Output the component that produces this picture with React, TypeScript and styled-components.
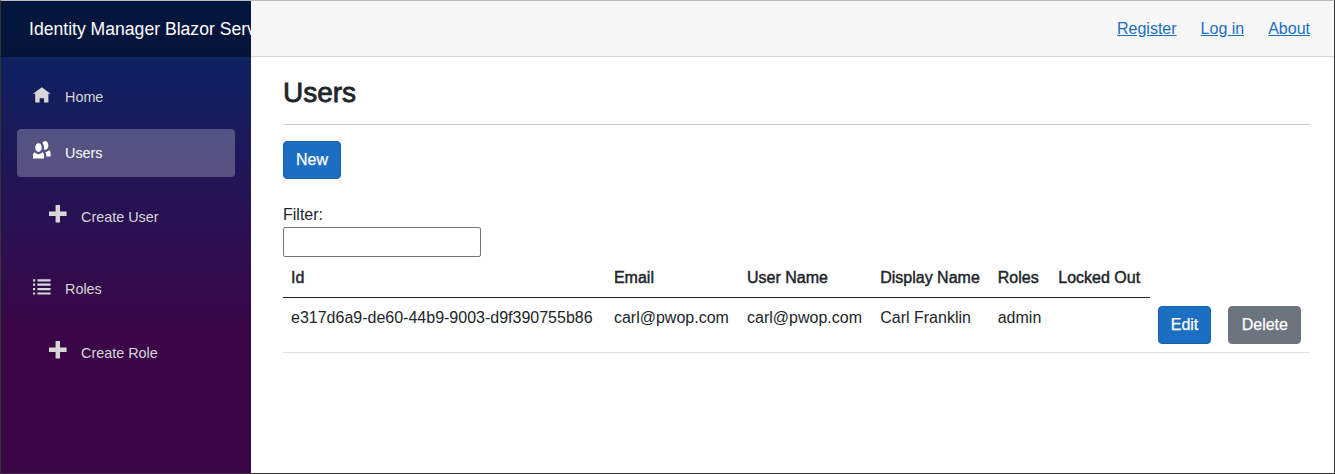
import React from 'react'
import styled, { createGlobalStyle } from 'styled-components'

const GlobalStyle = createGlobalStyle`
  html, body {
    margin: 0;
    padding: 0;
    height: 100%;
    background: #fff;
    overflow: hidden;
  }
  body {
    font-family: 'Liberation Sans', Arial, sans-serif;
    font-size: 16px;
    line-height: 1.5;
    color: #212529;
  }
  * {
    box-sizing: border-box;
  }
`

const Page = styled.div`
  display: flex;
  width: 1335px;
  height: 474px;
  border-top: 1px solid #bbb;
  border-left: 1px solid #333;
  border-right: 1px solid #333;
  border-bottom: 1px solid #333;
`

const Sidebar = styled.div`
  width: 250px;
  flex-shrink: 0;
  background-image: linear-gradient(180deg, #052767 0%, #3a0647 70%);
`

const Brand = styled.div`
  height: 56px;
  display: flex;
  align-items: center;
  padding-left: 28px;
  background-color: rgba(0, 0, 0, 0.4);
  overflow: hidden;
  white-space: nowrap;
  color: #fff;
  font-size: 17.6px;
`

const Nav = styled.nav`
  padding-top: 16px;
`

const NavItem = styled.div<{ $gap: number; $sub?: boolean }>`
  padding: 0 16px 0 ${p => (p.$sub ? 32 : 16)}px;
  margin-bottom: ${p => p.$gap}px;
`

const NavLink = styled.a<{ $active?: boolean }>`
  display: flex;
  align-items: center;
  height: 48px;
  padding: 2px 0 0 16px;
  border-radius: 4px;
  font-size: 14.4px;
  color: ${p => (p.$active ? '#fff' : '#d7d7d7')};
  background-color: ${p => (p.$active ? 'rgba(255, 255, 255, 0.25)' : 'transparent')};
`

const NavIcon = styled.svg`
  width: 17.6px;
  height: 17.6px;
  margin: 0 14.4px 8.4px 0;
  fill: currentColor;
  flex-shrink: 0;
`

const Main = styled.div`
  flex: 1;
  min-width: 0;
`

const TopRow = styled.div`
  height: 56px;
  display: flex;
  align-items: center;
  justify-content: flex-end;
  gap: 24px;
  padding-right: 24px;
  background-color: #f7f7f7;
  border-bottom: 1px solid #d6d5d5;
`

const TopLink = styled.a`
  color: #1b6ec2;
  text-decoration: underline;
`

const Content = styled.div`
  padding: 16px 24px 0 32px;
`

const Title = styled.h1`
  margin: 0;
  font-size: 28px;
  font-weight: 400;
  line-height: 40px;
  -webkit-text-stroke: 0.8px #212529;
`

const Rule = styled.hr`
  margin: 11px 0 16px;
  border: 0;
  border-top: 1px solid #c8c8c8;
`

const Button = styled.button<{ $variant?: 'primary' | 'secondary' }>`
  height: 38px;
  padding: 0 12px;
  font-family: inherit;
  font-size: 16px;
  line-height: 1.5;
  color: #fff;
  -webkit-text-stroke: 0.25px #fff;
  border-radius: 4px;
  border: 1px solid ${p => (p.$variant === 'secondary' ? '#6c757d' : '#1861ac')};
  background-color: ${p => (p.$variant === 'secondary' ? '#6c757d' : '#1b6ec2')};
`

const FilterLabel = styled.div`
  margin-top: 24px;
  line-height: 24px;
`

const FilterInput = styled.input`
  display: block;
  width: 198px;
  height: 30px;
  padding: 1px 2px;
  border: 1px solid #767676;
  border-radius: 2px;
  background: #fff;
`

const Table = styled.table`
  width: 100%;
  border-collapse: collapse;
  color: #212529;
`

const HeadCell = styled.th`
  padding: 9px 8px 7px;
  height: 40px;
  text-align: left;
  font-weight: 400;
  white-space: nowrap;
  font-size: 16px;
  -webkit-text-stroke: 0.45px #212529;
  border-bottom: 1px solid #212529;
  &:last-child {
    border-bottom: 0;
  }
`

const Cell = styled.td`
  padding: 8px;
  height: 55px;
  vertical-align: top;
  white-space: nowrap;
  border-bottom: 1px solid #dee2e6;
`

const ActionCell = styled(Cell)`
  padding-right: 6px;
`

const DeleteButton = styled(Button)`
  min-width: 73px;
  margin-left: 17px;
`

const HomeIcon = () => (
  <NavIcon viewBox="0 -1 8 8">
    <path d="M4 0l-4 3h1v4h2v-2h2v2h2v-4.03l1 .03-4-3z" />
  </NavIcon>
)

const PeopleIcon = () => (
  <NavIcon viewBox="0 0 8 8">
    <path d="M5.5 0c-.51 0-.95.35-1.22.88.45.54.72 1.28.72 2.13 0 .29-.03.55-.09.81.19.11.38.19.59.19.83 0 1.5-.9 1.5-2s-.67-2-1.5-2zm-3 1c-.83 0-1.5.9-1.5 2s.67 2 1.5 2 1.5-.9 1.5-2-.67-2-1.5-2zm4.75 3.16c-.43.51-1.02.82-1.69.84.27.38.44.84.44 1.34v.66h2v-1.66c0-.52-.31-.97-.75-1.19zm-6.5 1c-.44.22-.75.67-.75 1.19v1.66h5v-1.66c0-.52-.31-.97-.75-1.19-.45.53-1.06.84-1.75.84s-1.3-.32-1.75-.84z" />
  </NavIcon>
)

const PlusIcon = () => (
  <NavIcon viewBox="0 0 8 8">
    <path d="M3 0v3h-3v2h3v3h2v-3h3v-2h-3v-3h-2z" />
  </NavIcon>
)

const ListIcon = () => (
  <NavIcon viewBox="0 -1 8 8">
    <path d="M0 0h1v1h-1zM2 0h6v1h-6zM0 2h1v1h-1zM2 2h6v1h-6zM0 4h1v1h-1zM2 4h6v1h-6zM0 6h1v1h-1zM2 6h6v1h-6z" />
  </NavIcon>
)

const App = () => {
  return (
    <Page>
      <GlobalStyle />
      <Sidebar>
        <Brand>Identity Manager Blazor Server</Brand>
        <Nav>
          <NavItem $gap={8}>
            <NavLink><HomeIcon />Home</NavLink>
          </NavItem>
          <NavItem $gap={16}>
            <NavLink $active><PeopleIcon />Users</NavLink>
          </NavItem>
          <NavItem $gap={24} $sub>
            <NavLink><PlusIcon />Create User</NavLink>
          </NavItem>
          <NavItem $gap={16}>
            <NavLink><ListIcon />Roles</NavLink>
          </NavItem>
          <NavItem $gap={0} $sub>
            <NavLink><PlusIcon />Create Role</NavLink>
          </NavItem>
        </Nav>
      </Sidebar>
      <Main>
        <TopRow>
          <TopLink>Register</TopLink>
          <TopLink>Log in</TopLink>
          <TopLink>About</TopLink>
        </TopRow>
        <Content>
          <Title>Users</Title>
          <Rule />
          <Button>New</Button>
          <FilterLabel>Filter:</FilterLabel>
          <FilterInput />
          <Table>
            <thead>
              <tr>
                <HeadCell>Id</HeadCell>
                <HeadCell>Email</HeadCell>
                <HeadCell>User Name</HeadCell>
                <HeadCell>Display Name</HeadCell>
                <HeadCell>Roles</HeadCell>
                <HeadCell>Locked Out</HeadCell>
                <HeadCell />
              </tr>
            </thead>
            <tbody>
              <tr>
                <Cell>e317d6a9-de60-44b9-9003-d9f390755b86</Cell>
                <Cell>carl@pwop.com</Cell>
                <Cell>carl@pwop.com</Cell>
                <Cell>Carl Franklin</Cell>
                <Cell>admin</Cell>
                <Cell />
                <ActionCell>
                  <Button>Edit</Button>
                  <DeleteButton $variant="secondary">Delete</DeleteButton>
                </ActionCell>
              </tr>
            </tbody>
          </Table>
        </Content>
      </Main>
    </Page>
  )
}

export default App
